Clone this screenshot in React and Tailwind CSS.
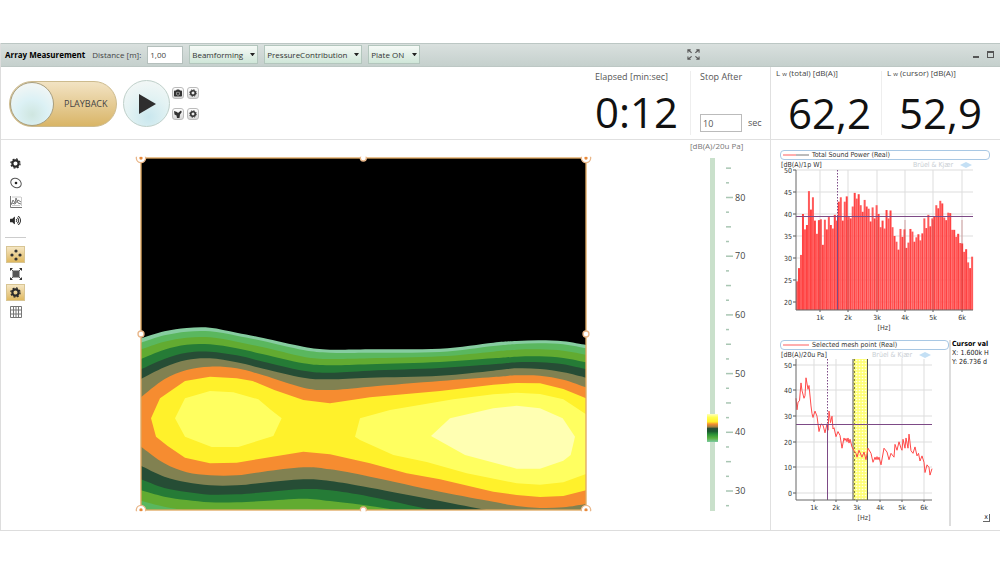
import React from 'react';
import { FaCamera, FaVolumeUp } from 'react-icons/fa';

const spectrum = [
  24.7, 27.7, 30.7, 40, 36.5, 37.5, 45.2, 41, 43.8, 38.5, 35.5, 38.6, 38.8, 33, 38.7, 36.5, 39.3, 37.5,
  36.7, 39.8, 38.5, 42.8, 43.8, 38.5, 42.8, 44, 39.3, 39, 41.7, 44.8, 43.5, 44.5, 42, 40.5, 43.2, 41.7,
  41.2, 38.3, 41.5, 39, 42, 40, 37, 38.5, 36.7, 40.9, 39, 40.8, 37, 35, 33.7, 31.9, 36.6, 34.8, 36.5,
  32.3, 33.5, 36.6, 36, 33.7, 34.7, 35.4, 34, 35.6, 39, 36.8, 39.8, 37.2, 39, 39.4, 42, 41.3, 43, 42.4,
  39.2, 38.6, 40.3, 40.2, 36.4, 36.4, 34.8, 35.5, 33.4, 33.3, 31.4, 32, 29, 27.7, 30.3,
];

// [x, dB]
const meshPoint = [
  [16, 37], [17, 32.5], [18, 35.5], [19.5, 36], [21, 43], [22, 40], [24, 37], [25, 38], [26, 45], [28, 40.5],
  [29, 42], [31, 34], [32, 31], [33, 29.5], [35, 32], [37, 30], [39, 24], [41, 27], [43, 26.5], [45, 23.5],
  [47, 27], [48, 24.5], [49, 32], [50.5, 27.5], [52, 30], [53, 25], [54, 25.5], [56, 22], [58, 24], [60, 22.5],
  [62, 17.5], [64, 21.5], [65, 20.5], [66, 21.3], [67, 20], [68, 21.5], [69, 19.5], [70, 21], [72, 18], [74, 16.5],
  [76, 15.5], [77, 14], [79, 16.7], [82, 14], [84, 16], [86, 13], [88, 17.5], [91, 15.5], [93, 12], [95, 14],
  [96, 13], [97, 14.2], [98, 13], [99, 14], [101, 11], [104, 17.5], [107, 16], [109, 13], [111, 15.5], [114, 14], [115, 19],
  [117, 16.7], [119, 20], [121, 17.5], [122, 16.7], [123, 21], [125, 17.5], [126, 21.5], [128, 17.5],
  [129, 23], [131, 16.5], [133, 15.5], [135, 18], [137, 14.5], [138.5, 15.5], [140, 12.5], [142, 14.5],
  [144, 12], [145, 8], [147, 11], [149, 10], [150, 7], [152, 9.5],
];

const meshX = [0, 70, 137, 207, 287, 367, 487, 567, 687, 897, 1057, 1127, 1197, 1267, 1335];

const bands = [
  {
    color: '#86cca0',
    top: [85, 64, 54, 53, 68, 84, 110, 119, 118, 116, 98, 93, 91, 94, 105],
    bottom: null,
  },
  {
    color: '#5ab75e',
    top: [98, 76, 65, 64, 77, 93, 120, 128, 128, 126, 108, 102, 100, 103, 115],
    bottom: null,
  },
  {
    color: '#62ab31',
    top: [118, 95, 83, 82, 95, 112, 140, 147, 145, 139, 125, 119, 118, 122, 134],
    bottom: [572, 590, 601, 608, 606, 602, 597, 604, 612, 620, 620, 620, 620, 620, 620],
  },
  {
    color: '#257b36',
    top: [147, 119, 104, 103, 115, 133, 160, 166, 163, 156, 145, 140, 139, 144, 157],
    bottom: [541, 560, 570, 577, 577, 573, 566, 573, 588, 620, 630, 630, 630, 630, 630],
  },
  {
    color: '#264d35',
    top: [178, 147, 128, 125, 136, 155, 182, 188, 182, 174, 163, 157, 157, 163, 178],
    bottom: [508, 534, 546, 554, 553, 547, 537, 541, 560, 604, 630, 630, 630, 630, 630],
  },
  {
    color: '#818151',
    top: [207, 172, 150, 145, 157, 176, 203, 208, 203, 197, 182, 175, 177, 187, 203],
    bottom: [467, 500, 517, 526, 526, 518, 508, 513, 533, 573, 604, 614, 620, 620, 620],
  },
  {
    color: '#f68c30',
    top: [262, 208, 180, 170, 175, 196, 233, 240, 230, 213, 201, 196, 197, 209, 232],
    bottom: [410, 460, 487, 496, 496, 485, 472, 478, 500, 545, 575, 588, 594, 592, 582],
  },
];

const hotspots = [
  {
    color: '#fff12b',
    points:
      '30,325 57,265 132,213 207,200 287,205 335,213 400,240 487,270 567,280 687,262 897,243 1057,224 1127,219 1197,220 1267,237 1335,265 1335,541 1267,558 1197,561 1127,555 1057,545 897,508 797,490 687,460 567,433 487,425 367,445 287,458 207,460 132,443 80,408 45,380',
  },
  {
    color: '#ffff60',
    points: '102,325 132,265 207,243 277,247 352,268 390,300 422,325 397,378 292,411 212,411 132,380',
  },
  {
    color: '#ffff60',
    points:
      '642,380 657,325 747,300 937,268 1057,253 1127,248 1197,252 1267,268 1335,313 1335,492 1267,517 1197,524 1127,520 977,490 857,456 757,435 657,390',
  },
  {
    color: '#ffffb2',
    points: '870,378 927,325 1057,295 1127,287 1197,295 1265,325 1302,380 1289,435 1267,452 1197,476 1127,476 972,435',
  },
];

// Catmull-Rom through the points, written as cubic segments
function curve(points) {
  let d = '';
  for (let i = 0; i < points.length - 1; i++) {
    const a = points[i - 1] || points[i];
    const b = points[i];
    const c = points[i + 1];
    const e = points[i + 2] || c;
    d += `C${b[0] + (c[0] - a[0]) / 6} ${b[1] + (c[1] - a[1]) / 6} ${c[0] - (e[0] - b[0]) / 6} ${c[1] - (e[1] - b[1]) / 6} ${c[0]} ${c[1]}`;
  }
  return d;
}

function bandPath({ top, bottom }) {
  const upper = meshX.map((x, i) => [x, top[i]]);
  const start = `M${upper[0].join(' ')}${curve(upper)}`;
  if (!bottom) return `${start}V610H0Z`;
  const lower = meshX.map((x, i) => [x, bottom[i]]).reverse();
  return `${start}L${lower[0].join(' ')}${curve(lower)}Z`;
}

const handles = [
  [0, 0, true], [667, 0, false], [1335, 0, true],
  [0, 528, false], [1335, 528, false],
  [0, 1056, true], [667, 1056, false], [1335, 1056, true],
];

function SoundMap() {
  return (
    <svg viewBox="0 0 1335 1056" className="block w-full" role="img" aria-label="Sound map" overflow="visible">
      <defs>
        <clipPath id="map-area">
          <rect width="1335" height="1056" />
        </clipPath>
        <clipPath id="handle-area">
          <rect x="-50" y="-4" width="1435" height="1064" />
        </clipPath>
      </defs>
      <g clipPath="url(#map-area)">
        <rect width="1335" height="1056" fill="#000" />
        <g transform="translate(0 456)">
          {bands.map((band) => (
            <path key={band.color} d={bandPath(band)} fill={band.color} />
          ))}
          {hotspots.map((spot) => (
            <polygon key={spot.points} points={spot.points} fill={spot.color} />
          ))}
        </g>
      </g>
      <rect width="1335" height="1056" fill="none" stroke="#e0a860" strokeWidth="4" />
      <g clipPath="url(#handle-area)">
        {handles.map(([x, y, corner]) => (
          <g key={`${x}-${y}`}>
            <circle cx={x} cy={y} r={corner ? 14 : 9} fill="#fff" stroke="#e9b78a" strokeWidth="4" />
            {corner && <circle cx={x} cy={y} r="5" fill="#e8893a" />}
          </g>
        ))}
      </g>
    </svg>
  );
}

function LevelScale() {
  const ticks = [];
  for (let i = 0; i < 24; i++) ticks.push(85 - i * 2.5);
  return (
    <svg viewBox="0 0 60 353" className="block w-[60px]" fontFamily="'Open Sans', sans-serif" fontSize="9">
      <defs>
        <linearGradient id="level-colors" x1="0" y1="0" x2="0" y2="1">
          <stop offset="0" stopColor="#ffffc0" />
          <stop offset="0.12" stopColor="#ffff50" />
          <stop offset="0.28" stopColor="#fff02a" />
          <stop offset="0.36" stopColor="#f68c30" />
          <stop offset="0.46" stopColor="#a08040" />
          <stop offset="0.52" stopColor="#264d35" />
          <stop offset="0.62" stopColor="#1d5a30" />
          <stop offset="0.72" stopColor="#2a9038" />
          <stop offset="0.86" stopColor="#5ab040" />
          <stop offset="1" stopColor="#7ccaa0" />
        </linearGradient>
      </defs>
      <rect x="10" y="0" width="5" height="353" fill="#c9e0cb" />
      <rect x="7" y="256" width="11" height="28" fill="url(#level-colors)" />
      {ticks.map((t) => {
        const y = 39.5 + (80 - t) * 5.87;
        const width = t % 10 === 0 ? 7 : t % 5 === 0 ? 5 : 3;
        return (
          <g key={t}>
            <line x1="26" x2={26 + width} y1={y} y2={y} stroke="#a9c6b3" strokeWidth="1.5" />
            {t % 10 === 0 && (
              <text x="35" y={y + 3} fill="#444">
                {t}
              </text>
            )}
          </g>
        );
      })}
    </svg>
  );
}

function Watermark({ x }) {
  return (
    <g>
      <text x={x} y="7" fontSize="7" fill="#c8ced3">
        Brüel &amp; Kjær
      </text>
      <path d={`M${x + 47} 5l6-3 6 3-6 3z`} fill="#c4e0f5" />
    </g>
  );
}

function Axes({ right, bottom, xs, ys, top }) {
  return (
    <g>
      {ys.map(([label, y]) => (
        <line key={label} x1="16" x2={right} y1={y} y2={y} stroke="#ddd" />
      ))}
      {xs.map(([label, x]) => (
        <line key={label} x1={x} x2={x} y1={top} y2={bottom} stroke="#ddd" />
      ))}
    </g>
  );
}

function AxisLabels({ right, bottom, xs, ys, top }) {
  return (
    <g fill="#333">
      {ys.map(([label, y]) => (
        <g key={label}>
          <line x1="13" x2="16" y1={y} y2={y} stroke="#555" />
          <text x="12" y={y + 3} textAnchor="end">
            {label}
          </text>
        </g>
      ))}
      {xs.map(([label, x]) => (
        <g key={label}>
          <line x1={x} x2={x} y1={bottom} y2={bottom + 2} stroke="#555" />
          <text x={x} y={bottom + 10} textAnchor="middle">
            {label}
          </text>
        </g>
      ))}
      <path d={`M16 ${top}V${bottom}H${right}`} fill="none" stroke="#666" />
    </g>
  );
}

function Legend({ title, second }) {
  return (
    <div className="flex h-[10px] items-center rounded border border-[#a9c8e4] bg-white px-[2px]">
      <svg viewBox="0 0 26 2" className="w-[26px] shrink-0">
        <path d="M0 1H13" stroke="#ff5c5c" />
        <path d="M13 1H26" stroke={second ? '#777' : '#ff5c5c'} />
      </svg>
      <span className="ml-[3px] text-[7px] leading-[8px] whitespace-nowrap text-[#333]">{title}</span>
    </div>
  );
}

function SoundPowerChart() {
  const frame = {
    right: 193,
    bottom: 150,
    top: 10,
    xs: [['1k', 40], ['2k', 68], ['3k', 97], ['4k', 125], ['5k', 153], ['6k', 182]],
    ys: [[50, 10], [45, 32], [40, 54], [35, 76], [30, 98], [25, 120], [20, 142]],
  };
  const toY = (db) => 10 + (50 - db) * 4.4;
  return (
    <section>
      <Legend title="Total Sound Power (Real)" second />
      <svg viewBox="0 0 210 174" className="block w-full" fontSize="7" role="img" aria-label="Total Sound Power">
        <Axes {...frame} />
        {spectrum.map((db, i) => (
          <rect
            key={i}
            x={16 + i * 1.99}
            y={toY(db)}
            width="2"
            height={150 - toY(db)}
            fill={i % 2 ? '#ff4242' : '#ff5a5a'}
          />
        ))}
        {frame.xs.map(([label, x]) => (
          <line key={label} x1={x} x2={x} y1="60" y2="150" stroke="#a33" strokeOpacity="0.4" />
        ))}
        <line x1="16" x2="193" y1="56.5" y2="56.5" stroke="#7d4a86" />
        <line x1="57.5" x2="57.5" y1="10" y2="56" stroke="#7d4a86" strokeDasharray="1.5 1.5" />
        <line x1="57.5" x2="57.5" y1="56" y2="150" stroke="#7d4a86" />
        <AxisLabels {...frame} />
        <text x="1" y="7" fill="#333">[dB(A)/1p W]</text>
        <text x="104" y="170" fill="#333" textAnchor="middle">[Hz]</text>
        <Watermark x={133} />
      </svg>
    </section>
  );
}

function MeshPointChart() {
  const frame = {
    right: 152,
    bottom: 150,
    top: 9,
    xs: [['1k', 34], ['2k', 56], ['3k', 77], ['4k', 100], ['5k', 122], ['6k', 144]],
    ys: [[50, 15], [40, 40], [30, 66], [20, 92], [10, 117], [0, 143]],
  };
  const line = meshPoint.map(([x, db]) => `${x},${143 - db * 2.56}`).join(' ');
  return (
    <section className="flex">
      <div className="min-w-0 flex-1">
        <Legend title="Selected mesh point (Real)" />
        <svg viewBox="0 0 169 176" className="block w-full" fontSize="7" role="img" aria-label="Selected mesh point">
          <defs>
            <pattern id="band-hatch" width="3" height="3" patternUnits="userSpaceOnUse">
              <rect width="3" height="3" fill="#ffff78" />
              <circle cx="1.5" cy="1.5" r="0.8" fill="#fffff0" />
            </pattern>
          </defs>
          <Axes {...frame} />
          <rect x="73" y="9" width="15" height="141" fill="url(#band-hatch)" />
          <path d="M73 9V150M87.5 9V150" stroke="#555" />
          <path d="M74.5 9V150" stroke="#883" strokeDasharray="2 2" />
          <polyline points={line} fill="none" stroke="#ff4a4a" />
          <line x1="16" x2="152" y1="74.5" y2="74.5" stroke="#7d4a86" />
          <line x1="47.5" x2="47.5" y1="9" y2="74" stroke="#7d4a86" strokeDasharray="1.5 1.5" />
          <line x1="47.5" x2="47.5" y1="74" y2="150" stroke="#7d4a86" />
          <AxisLabels {...frame} />
          <text x="1" y="7" fill="#333">[dB(A)/20u Pa]</text>
          <text x="84" y="170" fill="#333" textAnchor="middle">[Hz]</text>
          <Watermark x={92} />
        </svg>
      </div>
      <div className="flex w-[41px] flex-col border-l-2 border-[#ddd] pl-px text-[7px] leading-[9px] text-[#222]">
        <div className="whitespace-nowrap">
          <p className="font-bold text-black">Cursor val</p>
          <p>X: 1.600k H</p>
          <p>Y: 26.736 d</p>
        </div>
        <button type="button" aria-label="Close cursor values" className="mt-auto mb-1 self-end border-r border-b border-[#666] px-px text-[7px] leading-[7px]">
          x
        </button>
      </div>
    </section>
  );
}

function GearIcon() {
  return (
    <svg viewBox="0 0 12 12" className="w-[1em]" fill="none" stroke="currentColor">
      <circle cx="6" cy="6" r="3.4" strokeWidth="2.4" />
      <circle cx="6" cy="6" r="5" strokeWidth="1.4" strokeDasharray="2 1.93" />
    </svg>
  );
}

function MenuSelect({ label, value, options, className }) {
  return (
    <span className="relative inline-flex">
      <select
        aria-label={label}
        defaultValue={value}
        className={`h-[19px] appearance-none border border-[#b3c6bd] bg-linear-to-b from-[#f6faf7] to-[#cfe6d8] pl-[2px] text-[8px] leading-[16px] text-[#333] ${className}`}
      >
        {options.map((o) => (
          <option key={o}>{o}</option>
        ))}
      </select>
      <svg viewBox="0 0 6 4" className="pointer-events-none absolute top-2 right-[3px] w-[5px]">
        <path d="M0 0h6L3 4z" fill="#222" />
      </svg>
    </span>
  );
}

function TitleBar() {
  return (
    <header className="flex h-[24px] items-center border-t border-b border-[#bcc7c4] bg-linear-to-b from-[#d9e0de] to-[#c5d0cd] px-1 pb-px text-[8px]">
      <h1 className="mr-[7px] font-bold whitespace-nowrap text-black">Array Measurement</h1>
      <label htmlFor="distance" className="mr-[6px] whitespace-nowrap text-[#444]">Distance [m]:</label>
      <input id="distance" defaultValue="1,00" className="mr-[6px] h-[18px] w-[36px] border border-[#b5c0bd] bg-white pl-[2px] text-[#444]" />
      <div className="flex gap-[6px]">
        <MenuSelect label="Method" value="Beamforming" options={['Beamforming', 'Holography']} className="w-[69px]" />
        <MenuSelect label="Result" value="PressureContribution" options={['PressureContribution', 'Intensity']} className="w-[98px]" />
        <MenuSelect label="Plate" value="Plate ON" options={['Plate ON', 'Plate OFF']} className="w-[52px]" />
      </div>
      <div className="flex flex-1 justify-end pr-[273px]">
        <button type="button" aria-label="Expand">
          <svg viewBox="0 0 14 12" className="w-[13px]" fill="none" stroke="#555" strokeWidth="1.2">
            <path d="M1 4V1h3M10 1h3v3M13 8v3h-3M4 11H1V8M1 1l4 3M13 1L9 4M13 11L9 8M1 11l4-3" />
          </svg>
        </button>
      </div>
      <div className="flex items-center gap-2 pr-[2px]">
        <button type="button" aria-label="Minimize" className="mt-1 h-[2px] w-[6px] bg-[#555]" />
        <button type="button" aria-label="Maximize" className="h-[7px] w-[7px] border border-t-2 border-[#555]" />
      </div>
    </header>
  );
}

function SmallButton({ label, children }) {
  return (
    <button
      type="button"
      aria-label={label}
      className="flex h-[12px] w-[12px] items-center justify-center rounded-[3px] border border-[#bbb] bg-linear-to-b from-white to-[#d8d8d8] text-[8px] text-[#333]"
    >
      {children}
    </button>
  );
}

function Controls() {
  return (
    <div className="flex flex-1 items-center pt-px pl-2">
      <button
        type="button"
        role="switch"
        aria-checked="false"
        className="flex h-[46px] w-[108px] items-center rounded-full border border-[#cdbb8e] bg-linear-to-b from-[#f2e3c3] to-[#d9b566] text-[9px] text-[#444]"
      >
        <span className="h-[44px] w-[44px] rounded-full border border-[#a89f80] bg-[radial-gradient(circle_at_50%_75%,#cfe6e0,#dcf1f5_40%,#f1f6f5_80%)]" />
        <span className="ml-[10px]">PLAYBACK</span>
      </button>
      <button
        type="button"
        aria-label="Play"
        className="ml-[6px] flex h-[47px] w-[47px] items-center justify-center rounded-full border border-[#bfd0ca] bg-[radial-gradient(circle_at_55%_80%,#c9e7ee,#e2f2f3_45%,#f3f7f6_85%)]"
      >
        <svg viewBox="0 0 18 20" className="w-[18px]">
          <path d="M1 0l17 10L1 20z" fill="#2e2e2e" />
        </svg>
      </button>
      <div className="ml-[2px] grid grid-cols-2 gap-x-[3px] gap-y-[9px]">
        <SmallButton label="Snapshot"><FaCamera /></SmallButton>
        <SmallButton label="Snapshot settings"><GearIcon /></SmallButton>
        <SmallButton label="Record">
          <svg viewBox="0 0 8 8" className="w-[8px]" fill="#333">
            <path d="M0 1l3 1 1 1 3-2.500.8 1.500L6 4.500 5.500 8H3L2.500 5.500.5 4.500z" />
          </svg>
        </SmallButton>
        <SmallButton label="Record settings"><GearIcon /></SmallButton>
      </div>
    </div>
  );
}

function Readout({ label, value }) {
  return (
    <div>
      <p className="pl-[5px] text-[8px] leading-[11px] whitespace-nowrap text-[#444]">{label}</p>
      <p className="pt-1 pl-[17px] text-[42px] leading-[57px] text-[#111]">{value}</p>
    </div>
  );
}

function LwLabel({ kind }) {
  return (
    <>
      L <span className="text-[6px]">w</span> ({kind}) [dB(A)]
    </>
  );
}

function StatusRow() {
  return (
    <div className="flex h-[73px] border-b border-[#e0e0e0]">
      <Controls />
      <div className="w-[95px]">
        <p className="pt-1 text-[9px] leading-[12px] whitespace-nowrap text-[#555]">Elapsed [min:sec]</p>
        <p className="text-[42px] leading-[57px] text-[#111]">0:12</p>
      </div>
      <div className="my-1 flex w-[80px] flex-col border-l border-[#eee] pl-[9px] text-[9px] text-[#555]">
        <label htmlFor="stop-after" className="leading-[12px]">Stop After</label>
        <div className="mt-[31px] flex items-center gap-[6px]">
          <input id="stop-after" defaultValue="10" className="h-[18px] w-[42px] border border-[#bbb] pl-[2px]" />
          <span>sec</span>
        </div>
      </div>
      <div className="flex w-[230px] border-l border-[#e0e0e0]">
        <div className="w-[110px]">
          <Readout label={<LwLabel kind="total" />} value="62,2" />
        </div>
        <div className="my-1 border-l border-[#eee]" />
        <Readout label={<LwLabel kind="cursor" />} value="52,9" />
      </div>
    </div>
  );
}

function ToolButton({ label, active, children }) {
  return (
    <button
      type="button"
      aria-label={label}
      aria-pressed={!!active}
      className={
        active
          ? 'flex h-[17px] w-[19px] items-center justify-center border border-[#d8c594] bg-linear-to-b from-[#f5e6c2] to-[#e0b95f] text-[11px] text-[#2b2b2b]'
          : 'flex h-[17px] w-[19px] items-center justify-center text-[11px] text-[#2b2b2b]'
      }
    >
      {children}
    </button>
  );
}

function SideTools() {
  return (
    <nav className="flex w-[29px] flex-col items-center gap-[2px] pt-[15px]">
      <ToolButton label="Settings"><GearIcon /></ToolButton>
      <ToolButton label="View">
        <svg viewBox="0 0 12 12" className="w-[12px]" fill="none" stroke="#555">
          <ellipse cx="6" cy="6" rx="5.5" ry="4.5" transform="rotate(35 6 6)" />
          <circle cx="6" cy="6" r="1.3" fill="#222" stroke="none" />
        </svg>
      </ToolButton>
      <ToolButton label="Spectrum">
        <svg viewBox="0 0 12 12" className="w-[12px]" fill="none" stroke="#777">
          <path d="M.5 0v11.500H12" />
          <path d="M2 1h9M11.500 1v9M2 9.500h8" stroke="#ccc" />
          <path d="M1 9l2-5 2 3 1-5 2 5 3 1M2 7l3 1 3-4 3 2" />
        </svg>
      </ToolButton>
      <ToolButton label="Sound"><FaVolumeUp /></ToolButton>
      <div className="my-[6px] h-px w-[21px] bg-[#ccc]" />
      <ToolButton label="Move points" active>
        <svg viewBox="0 0 12 12" className="w-[12px]" fill="#333">
          <circle cx="6" cy="2" r="1.6" />
          <circle cx="2" cy="6" r="1.6" />
          <circle cx="10" cy="6" r="1.6" />
          <circle cx="6" cy="10" r="1.6" />
        </svg>
      </ToolButton>
      <ToolButton label="Fit">
        <svg viewBox="0 0 12 12" className="w-[12px]" fill="#555">
          <rect x="2.500" y="2.500" width="7" height="7" />
          <path d="M0 0h3L0 3zM12 0v3L9 0zM0 12V9l3 3zM12 12H9l3-3z" fill="#333" />
          <path d="M1 1l10 10M11 1L1 11" stroke="#555" />
        </svg>
      </ToolButton>
      <ToolButton label="Map settings" active><GearIcon /></ToolButton>
      <ToolButton label="Grid">
        <svg viewBox="0 0 12 12" className="w-[12px]" fill="none" stroke="#777">
          <path d="M.5.5h11v11H.5zM3.500 0v12M6 0v12M8.500 0v12M0 4h12M0 8h12" />
        </svg>
      </ToolButton>
    </nav>
  );
}

export default function App() {
  return (
    <div className="bg-white pt-[43px] font-['Open_Sans',sans-serif]">
      <div className="border-b border-l border-[#ddd]">
        <TitleBar />
        <StatusRow />
        <main className="flex">
          <SideTools />
          <div className="flex-1 pt-[18px] pr-[104px] pb-5 pl-[111px]">
            <SoundMap />
          </div>
          <div className="w-[80px]">
            <p className="h-[18px] text-[8px] leading-[12px] text-[#777]">[dB(A)/20u Pa]</p>
            <div className="pl-[10px]">
              <LevelScale />
            </div>
          </div>
          <aside className="flex w-[230px] flex-col gap-[6px] border-l border-[#e0e0e0] pt-[10px] pr-[10px] pl-[9px] font-['DejaVu_Sans_Condensed','DejaVu_Sans',sans-serif]">
            <SoundPowerChart />
            <MeshPointChart />
          </aside>
        </main>
      </div>
    </div>
  );
}
